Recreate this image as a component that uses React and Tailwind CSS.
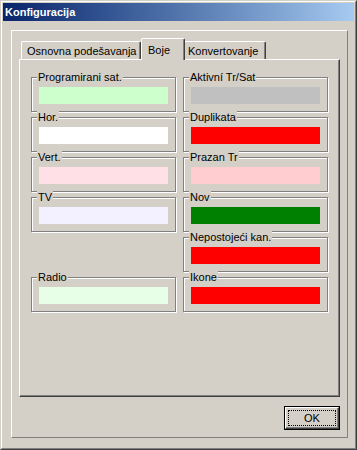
import React from "react";

const left = [
  { label: "Programirani sat.", color: "#ccffcc" },
  { label: "Hor.", color: "#ffffff" },
  { label: "Vert.", color: "#ffe0e6" },
  { label: "TV", color: "#f3f1ff" },
  null,
  { label: "Radio", color: "#e6ffe6" },
];
const right = [
  { label: "Aktivní Tr/Sat", color: "#c0c0c0" },
  { label: "Duplikata", color: "#ff0000" },
  { label: "Prazan Tr", color: "#ffccd0" },
  { label: "Nov", color: "#008000" },
  { label: "Nepostojeći kan.", color: "#ff0000" },
  { label: "Ikone", color: "#ff0000" },
];

function Group({ item }) {
  if (!item) return <div className="h-[35px]" />;
  return (
    <div className="relative h-[35px] border border-[#808080] shadow-[inset_1px_1px_0_#fff,1px_1px_0_#fff] pl-[7px] pt-[9px]">
      <span className="absolute left-[5px] top-[-7px] bg-[#d4d0c8] px-px leading-[13px] whitespace-nowrap">
        {item.label}
      </span>
      <div className="w-[129px] h-[17px]" style={{ backgroundColor: item.color }} />
    </div>
  );
}

export default function App() {
  const cells = [];
  for (let i = 0; i < 6; i++) {
    cells.push(<Group key={"l" + i} item={left[i]} />);
    cells.push(<Group key={"r" + i} item={right[i]} />);
  }
  return (
    <div className="w-[357px] h-[450px] bg-[#d4d0c8] border border-t-[#d4d0c8] border-l-[#d4d0c8] border-r-[#404040] border-b-[#404040] font-['Liberation_Sans',Arial,sans-serif] text-[11px] text-black">
      <div className="h-full border border-t-white border-l-white border-r-[#808080] border-b-[#808080] p-px flex flex-col">
        <div className="h-[18px] shrink-0 bg-linear-to-r from-[#0a246a] to-[#a6caf0] text-white font-bold text-[11px] flex items-center pl-[2px]">
          Konfiguracija
        </div>
        <div className="ml-[8px] mt-[9px] w-[337px] h-[408px] border border-t-white border-l-white border-r-[#808080] border-b-[#808080] p-[7px] flex flex-col">
          {/* tabs */}
          <div className="flex items-end h-[21px] pl-[2px]">
            <div className="w-[120px] h-[18px] border-t border-l border-t-white border-l-white border-r border-r-[#404040] shadow-[inset_-1px_0_0_#808080] rounded-tl-[2px] rounded-tr-[2px] flex items-center pl-[5px] pt-[2px]">
              Osnovna podešavanja
            </div>
            <div className="relative z-10 -mb-px w-[44px] h-[22px] bg-[#d4d0c8] border-t border-l border-t-white border-l-white border-r border-r-[#404040] shadow-[inset_-1px_0_0_#808080] rounded-tl-[2px] rounded-tr-[2px] flex items-start pl-[6px] pt-[3px]">
              Boje
            </div>
            <div className="w-[81px] h-[18px] border-t border-r border-t-white border-r-[#404040] shadow-[inset_-1px_0_0_#808080] rounded-tr-[2px] flex items-center pl-[3px] pt-[2px]">
              Konvertovanje
            </div>
          </div>
          {/* page */}
          <div className="w-[321px] h-[339px] border border-t-white border-l-white border-r-[#404040] border-b-[#404040] shadow-[inset_-1px_-1px_0_#808080] pl-[11px] pt-[17px]">
            <div className="grid grid-cols-[145px_145px] gap-x-[7px] gap-y-[5px]">
              {cells}
            </div>
          </div>
          {/* button */}
          <div className="flex justify-end mt-[9px]">
            <div className="w-[56px] h-[24px] border border-black">
              <div className="h-full border border-t-white border-l-white border-r-[#404040] border-b-[#404040] shadow-[inset_-1px_-1px_0_#808080] p-[2px]">
                <div className="h-full border border-dotted border-black flex items-center justify-center">
                  OK
                </div>
              </div>
            </div>
          </div>
        </div>
      </div>
    </div>
  );
}
